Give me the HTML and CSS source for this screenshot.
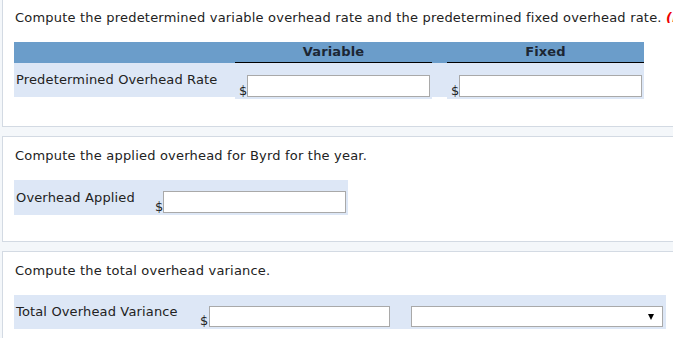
FILE: index.html
```html
<!DOCTYPE html>
<html lang="en">
<head>
<meta charset="UTF-8">
<meta name="viewport" content="width=device-width, initial-scale=1.0">
<title>Overhead Rates</title>
<link rel="stylesheet" href="styles.css">
</head>
<body>

  <!-- part 1 : predetermined rates -->
  <div class="panel panel-first">
    <p class="question">Compute the predetermined variable overhead rate and the predetermined fixed overhead rate. <span class="hint">(Round answers to 2 decimal places, e.g. 1.25.)</span></p>

    <div class="rate-table">
      <div class="rate-head"></div>
      <div class="rate-head col-head">Variable</div>
      <div class="rate-head"></div>
      <div class="rate-head col-head">Fixed</div>

      <div class="rate-cell label">Predetermined Overhead Rate</div>
      <div class="rate-cell money"><span class="dollar">$</span><input type="text" class="answer"></div>
      <div class="rate-cell"></div>
      <div class="rate-cell money"><span class="dollar">$</span><input type="text" class="answer"></div>
    </div>
  </div>

  <!-- part 2 : applied overhead -->
  <div class="panel">
    <p class="question">Compute the applied overhead for Byrd for the year.</p>
    <div class="answer-row applied-row">
      <div class="label applied-label">Overhead Applied</div>
      <div class="money"><span class="dollar">$</span><input type="text" class="answer applied-input"></div>
    </div>
  </div>

  <!-- part 3 : total variance -->
  <div class="panel">
    <p class="question">Compute the total overhead variance.</p>
    <div class="answer-row variance-row">
      <div class="label variance-label">Total Overhead Variance</div>
      <div class="money"><span class="dollar">$</span><input type="text" class="answer variance-input"></div>
      <div class="select-wrap">
        <select class="choice">
          <option></option>
          <option>Favorable</option>
          <option>Unfavorable</option>
        </select>
      </div>
    </div>
  </div>

</body>
</html>
```

FILE: styles.css
```css
html {
  background: #f4f7fa;
}

body {
  margin: 0;
  overflow: hidden;
  font-family: "DejaVu Sans", Verdana, sans-serif;
  font-size: 13px;
  letter-spacing: 0.15px;
  color: #222;
}

.panel {
  background: #fff;
  border: 1px solid #d3dae3;
  margin: 0 -40px 9px 2px;
  padding: 11px 0 26px 11px;
}

.panel-first {
  border-top: none;
  padding-top: 10px;
  padding-bottom: 27px;
}

.question {
  margin: 0 0 16px 1px;
  line-height: 16px;
  white-space: nowrap;
  letter-spacing: 0.2px;
}

.panel-first .question {
  margin-bottom: 16px;
}

.hint {
  color: #e00;
  font-weight: bold;
  font-style: italic;
}

/* rates table */
.rate-table {
  display: grid;
  grid-template-columns: 221px 197px 15px 197px;
}

.rate-head {
  background: #6b9dca;
  height: 21px;
}

.col-head {
  font-weight: bold;
  color: #1c2633;
  text-align: center;
  line-height: 20px;
  border-bottom: 1px solid #000;
  height: 20px;
}

.rate-cell {
  background: #dde7f6;
  height: 34px;
}

.label {
  display: flex;
  align-items: center;
  padding-left: 2px;
  line-height: 16px;
}

.money {
  display: flex;
  align-items: flex-end;
  padding-bottom: 2px;
}

.rate-table .money {
  padding-left: 4px;
}

.dollar {
  line-height: 14px;
  width: 8px;
  margin-bottom: -1px;
}

.answer {
  box-sizing: border-box;
  width: 183px;
  height: 22px;
  margin: 0;
  border: 1px solid #a9a9a9;
  background: #fff;
  font: inherit;
  padding: 0 3px;
}

/* single answer rows */
.answer-row {
  display: flex;
  background: #dde7f6;
  height: 35px;
}

.applied-row {
  width: 334px;
}

.applied-label {
  width: 139px;
}

.applied-input {
  width: 183px;
}

.variance-row {
  width: 652px;
  height: 34px;
}

.variance-label {
  width: 184px;
}

.variance-input {
  width: 181px;
  height: 21px;
  margin-left: 1px;
}

.select-wrap {
  position: relative;
  margin: 11px 0 0 21px;
  height: 21px;
}

.choice {
  appearance: none;
  box-sizing: border-box;
  width: 252px;
  height: 21px;
  margin: 0;
  border: 1px solid #a9a9a9;
  border-radius: 0;
  background: #fff;
  font: inherit;
}

.select-wrap::after {
  content: "";
  position: absolute;
  right: 9px;
  top: 8px;
  border-left: 3px solid transparent;
  border-right: 3px solid transparent;
  border-top: 6px solid #000;
}
```
